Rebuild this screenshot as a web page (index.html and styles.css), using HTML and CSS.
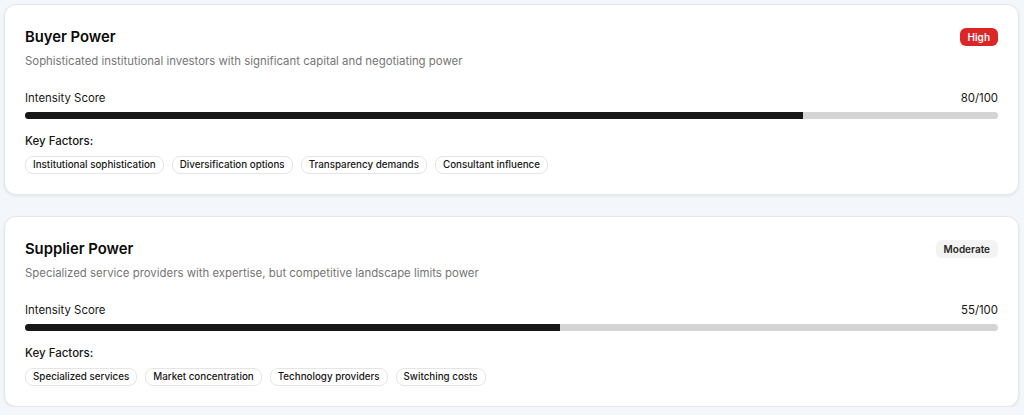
FILE: index.html
```html
<!DOCTYPE html>
<html lang="en">
<head>
<meta charset="utf-8">
<link rel="stylesheet" href="styles.css">
</head>
<body>
<div class="page">
  <section class="card">
    <div class="card-head">
      <h2 class="title">Buyer Power</h2>
      <span class="badge badge-high">High</span>
    </div>
    <p class="desc">Sophisticated institutional investors with significant capital and negotiating power</p>
    <div class="score-row"><span>Intensity Score</span><span>80/100</span></div>
    <div class="track"><div class="fill" style="width:80%"></div></div>
    <div class="kf-label">Key Factors:</div>
    <div class="chips">
      <span class="chip">Institutional sophistication</span>
      <span class="chip">Diversification options</span>
      <span class="chip">Transparency demands</span>
      <span class="chip">Consultant influence</span>
    </div>
  </section>
  <section class="card">
    <div class="card-head">
      <h2 class="title">Supplier Power</h2>
      <span class="badge badge-moderate">Moderate</span>
    </div>
    <p class="desc">Specialized service providers with expertise, but competitive landscape limits power</p>
    <div class="score-row"><span>Intensity Score</span><span>55/100</span></div>
    <div class="track"><div class="fill" style="width:55%"></div></div>
    <div class="kf-label">Key Factors:</div>
    <div class="chips">
      <span class="chip">Specialized services</span>
      <span class="chip">Market concentration</span>
      <span class="chip">Technology providers</span>
      <span class="chip">Switching costs</span>
    </div>
  </section>
</div>
</body>
</html>
```
FILE: styles.css
```css
* { box-sizing: border-box; }
html, body { margin: 0; padding: 0; }
body {
  background: #f3f6fa;
  font-family: Inter, "Liberation Sans", Arial, sans-serif;
  color: #171717;
}
.page {
  padding: 4px 5px 0 4px;
  display: flex;
  flex-direction: column;
  gap: 21px;
}
.card {
  background: #ffffff;
  border: 1px solid #e5e7eb;
  border-radius: 12px;
  box-shadow: 0 1px 3px rgba(0,0,0,0.08);
  padding: 20px;
}
.card-head {
  display: flex;
  justify-content: space-between;
  align-items: center;
  height: 24px;
}
.title {
  margin: 0;
  font-size: 14.8px;
  line-height: 24px;
  font-weight: 600;
  color: #0a0a0a;
}
.badge {
  font-size: 10px;
  line-height: 18px;
  height: 18px;
  font-weight: 600;
  padding: 0 8px;
  border-radius: 6px;
}
.badge-high { background: #dc2626; color: #ffffff; }
.badge-moderate { background: #f3f3f3; color: #262626; }
.desc {
  margin: 2px 0 0;
  font-size: 11.4px;
  line-height: 20px;
  color: #767676;
}
.score-row {
  margin-top: 17px;
  display: flex;
  justify-content: space-between;
  font-size: 11.4px;
  line-height: 20px;
  color: #171717;
}
.track {
  margin-top: 4px;
  height: 7px;
  border-radius: 999px;
  background: #d4d4d4;
  overflow: hidden;
}
.fill {
  height: 100%;
  background: #171717;
}
.kf-label {
  margin-top: 12px;
  font-size: 11.5px;
  line-height: 20px;
  font-weight: 500;
}
.chips {
  margin-top: 5px;
  display: flex;
  flex-wrap: wrap;
  gap: 8px;
}
.chip {
  font-size: 9.8px;
  line-height: 16px;
  font-weight: 500;
  padding: 0 7px;
  border: 1px solid #e5e5e5;
  border-radius: 8px;
  color: #171717;
}
```
